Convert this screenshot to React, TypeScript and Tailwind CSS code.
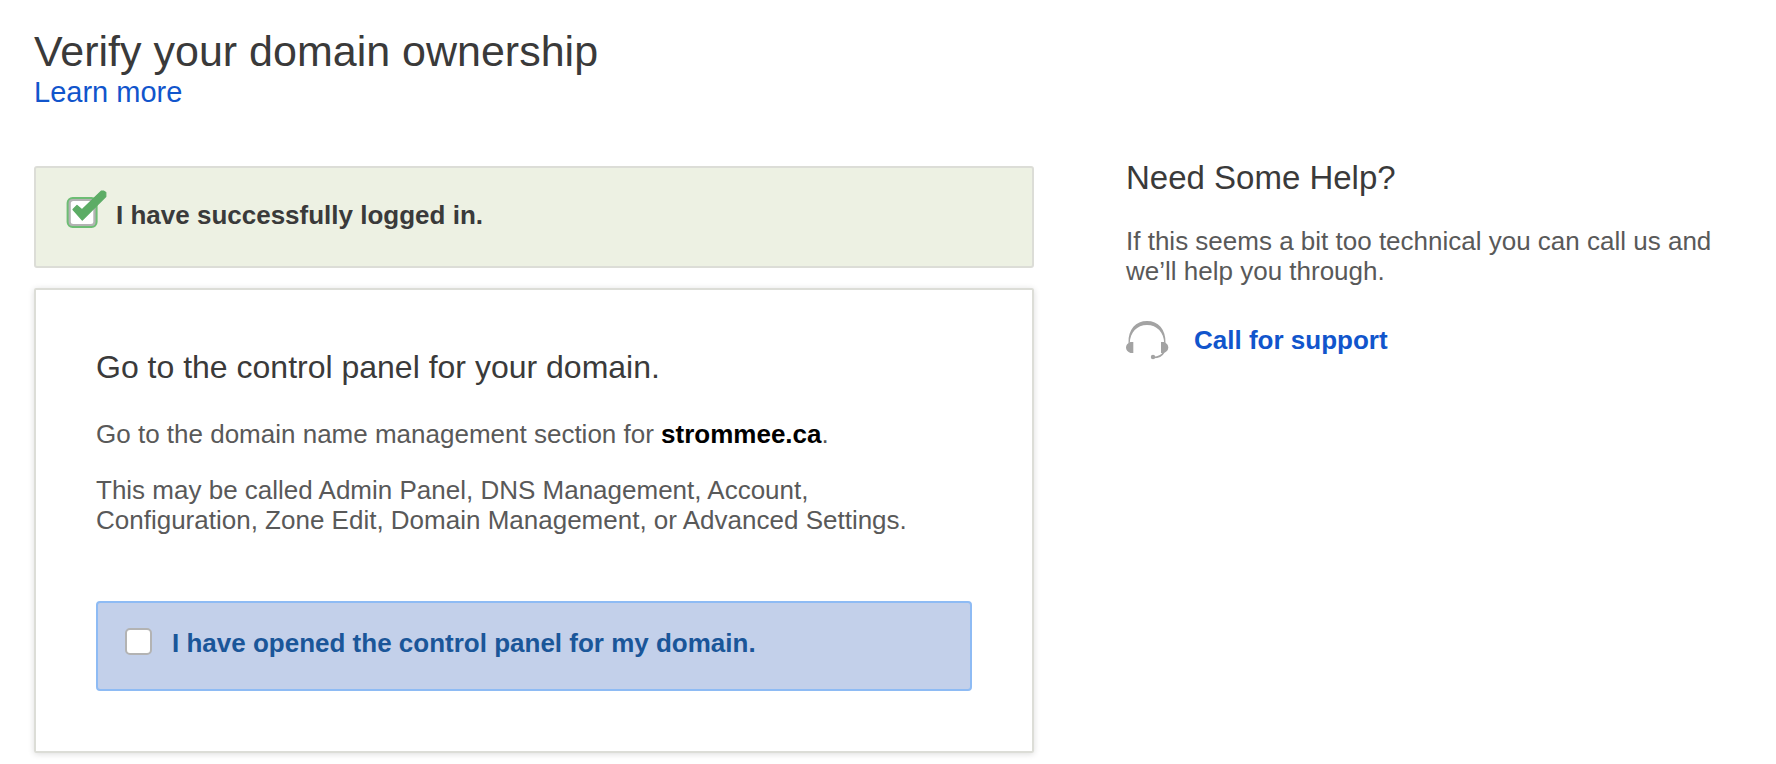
import { useState } from "react";

function CheckedIcon() {
  return (
    <svg viewBox="0 0 42 40" className="h-10 w-[42px] shrink-0" aria-hidden="true">
      <rect x="2.600" y="8" width="29" height="29" rx="5" fill="#b3b3b3" stroke="#6dbd74" strokeWidth="2" />
      <rect x="5.800" y="11" width="22.500" height="23" rx="2.500" fill="#fff" />
      <path
        d="M8 19.500L12 15.500L17 19.800L36.500 1L38.500 1L40.800 2.500V6.500L17.300 30Z"
        fill="#5cac65"
        stroke="#5cac65"
        strokeWidth="1.200"
        strokeLinejoin="round"
      />
    </svg>
  );
}

function HeadsetIcon() {
  return (
    <svg viewBox="0 0 44 40" className="h-10 w-11 shrink-0" aria-hidden="true" fill="#a3a3a3">
      <path d="M2.500 23C2 9 10 1 21 1S40 9 39.500 23H38.200C38 12.500 31 5 21 5S4 12.500 3.800 23z" />
      <path d="M7.300 22v11H4.500C1.500 32 0 30 0 27.500S1.500 23 4.500 22z" />
      <path d="M35 22v11h2.800C40.800 32 42.300 30 42.300 27.500S40.800 23 37.800 22z" />
      <path d="M38 32C36 35.500 33 37.500 27.500 37.500" fill="none" stroke="#a3a3a3" strokeWidth="1.600" />
      <circle cx="27" cy="37" r="2.200" />
    </svg>
  );
}

export default function App() {
  const [opened, setOpened] = useState(false);

  return (
    <main className="bg-white pt-[27px] pr-[42px] pb-3 pl-[34px] font-['Liberation_Sans',Arial,sans-serif] text-[26px] leading-[30px] text-[#595959]">
      <header className="flex flex-col items-start">
        <h1 className="text-[43px] leading-[48px] text-[#3a3a3a]">Verify your domain ownership</h1>
        <a href="#learn-more" className="text-[29px] leading-[34px] text-[#1155cc]">
          Learn more
        </a>
      </header>

      <div className="mt-[49px] grid grid-cols-[minmax(0,1000fr)_minmax(0,608fr)] items-start gap-[92px]">
        <div className="flex flex-col gap-5 pt-2">
          <section className="flex items-start gap-[9px] rounded-[3px] border-2 border-[#dcddd7] bg-[#edf1e3] px-[29px] pt-[22px] pb-9">
            <CheckedIcon />
            <p className="pt-[10px] font-bold text-[#3a3a3a]">I have successfully logged in.</p>
          </section>

          <section className="rounded-[2px] border-2 border-[#dcddd7] p-[60px] shadow-[0_1px_6px_rgba(0,0,0,0.14)]">
            <h2 className="text-[32px] leading-[34px] text-[#3a3a3a]">
              Go to the control panel for your domain.
            </h2>
            <p className="mt-[35px]">
              Go to the domain name management section for <strong className="text-black">strommee.ca</strong>.
            </p>
            <p className="mt-[26px]">
              This may be called Admin Panel, DNS Management, Account, Configuration, Zone Edit, Domain
              Management, or Advanced Settings.
            </p>
            <label className="mt-[66px] flex items-start gap-5 rounded-[4px] border-2 border-[#8ebbf4] bg-[#c3d0ea] px-[27px] pt-[25px] pb-[31px] font-bold text-[#1a5699]">
              <input
                type="checkbox"
                checked={opened}
                onChange={(e) => setOpened(e.target.checked)}
                className="size-[27px] shrink-0 appearance-none rounded-[5px] border-2 border-[#b3b3b3] bg-white checked:bg-[#5cac65]"
              />
              <span>I have opened the control panel for my domain.</span>
            </label>
          </section>
        </div>

        <aside>
          <h2 className="text-[33px] leading-[40px] text-[#3a3a3a]">Need Some Help?</h2>
          <p className="mt-7">If this seems a bit too technical you can call us and we’ll help you through.</p>
          <div className="mt-[34px] flex items-center gap-6">
            <HeadsetIcon />
            <a href="#support" className="font-bold text-[#1155cc]">
              Call for support
            </a>
          </div>
        </aside>
      </div>
    </main>
  );
}
